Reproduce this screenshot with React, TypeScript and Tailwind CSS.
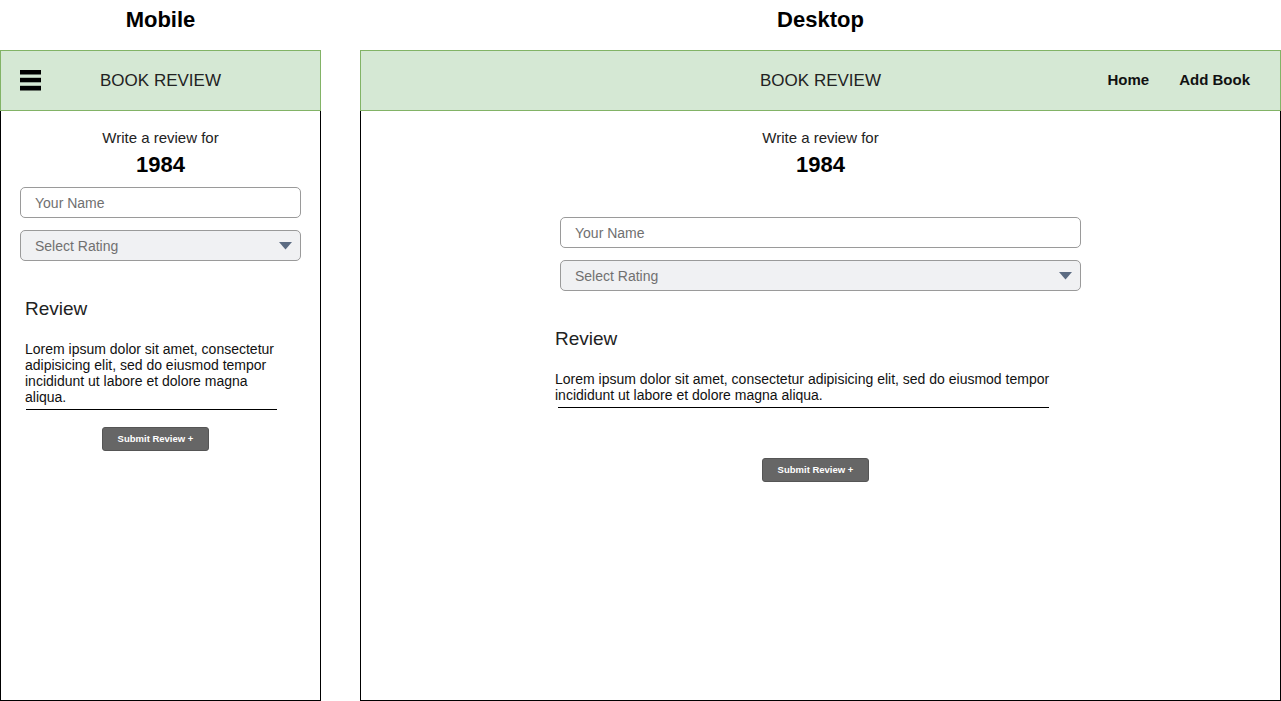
import React from "react";

const font = { fontFamily: '"Liberation Sans", Arial, sans-serif' };

function Hamburger() {
  return (
    <svg width="21" height="21" viewBox="0 0 21 21">
      <rect x="0" y="0" width="21" height="4.5" fill="#000" />
      <rect x="0" y="7.8" width="21" height="4.5" fill="#000" />
      <rect x="0" y="15.8" width="21" height="4.7" fill="#000" />
    </svg>
  );
}

function Caret() {
  return (
    <svg width="13" height="8" viewBox="0 0 13 8">
      <path d="M0 0 H13 L6.5 7.5 Z" fill="#5b6b82" />
    </svg>
  );
}

function NameInput() {
  return (
    <div className="h-[31px] w-full rounded-[5px] border border-[#9a9a9a] bg-white flex items-center pl-[14px] pt-px text-[14px] text-[#707070]">
      Your Name
    </div>
  );
}

function RatingSelect() {
  return (
    <div className="h-[31px] w-full rounded-[5px] border border-[#9a9a9a] bg-[#f0f1f3] flex items-center justify-between pl-[14px] pr-[8px] pt-px text-[14px] text-[#707070]">
      <span>Select Rating</span>
      <Caret />
    </div>
  );
}

function SubmitButton() {
  return (
    <div className="h-[24px] w-[107px] rounded-[3px] border border-[#555] bg-[#666666] flex items-center justify-center text-[9.5px] font-bold text-white">
      Submit Review +
    </div>
  );
}

export default function App() {
  return (
    <div className="w-[1281px] h-[701px] bg-white text-black overflow-hidden" style={font}>
      <div className="flex h-[50px] items-center">
        <div className="w-[321px] text-center text-[22px] font-bold leading-[26px] -mt-[10px]">Mobile</div>
        <div className="w-[39px]" />
        <div className="w-[921px] text-center text-[22px] font-bold leading-[26px] -mt-[10px]">Desktop</div>
      </div>
      <div className="flex gap-[39px] h-[651px]">
        {/* Mobile */}
        <div className="w-[321px] flex flex-col">
          <div className="h-[61px] bg-[#d5e8d4] border border-[#82b366] grid grid-cols-[1fr_auto_1fr] items-center">
            <div className="pl-[19px] flex items-center">
              <Hamburger />
            </div>
            <div className="text-[17px] text-[#222]">BOOK REVIEW</div>
            <div />
          </div>
          <div className="flex-1 border-x border-b border-black flex flex-col">
            <div className="mt-[18px] text-center text-[15px] leading-[17px] text-[#222]">Write a review for</div>
            <div className="mt-[6px] text-center text-[22px] font-bold leading-[26px]">1984</div>
            <div className="mt-[9px] ml-[19px] w-[281px] flex flex-col gap-[12px]">
              <NameInput />
              <RatingSelect />
            </div>
            <div className="mt-[37px] ml-[24px] text-[19px] leading-[22px] text-[#222]">Review</div>
            <div className="mt-[21px] ml-[24px] w-[256px] text-[14px] leading-[16px] text-[#111]">
              Lorem ipsum dolor sit amet, consectetur adipisicing elit, sed do eiusmod tempor incididunt ut labore et dolore magna aliqua.
            </div>
            <div className="mt-[4px] ml-[25px] w-[251px] h-px bg-black" />
            <div className="mt-[17px] ml-[101px]">
              <SubmitButton />
            </div>
          </div>
        </div>
        {/* Desktop */}
        <div className="w-[921px] flex flex-col">
          <div className="h-[61px] bg-[#d5e8d4] border border-[#82b366] grid grid-cols-[1fr_auto_1fr] items-center">
            <div />
            <div className="text-[17px] text-[#222]">BOOK REVIEW</div>
            <div className="flex justify-end gap-[30px] pr-[30px] text-[15px] font-bold text-[#111]">
              <span>Home</span>
              <span>Add Book</span>
            </div>
          </div>
          <div className="flex-1 border-x border-b border-black flex flex-col">
            <div className="mt-[18px] text-center text-[15px] leading-[17px] text-[#222]">Write a review for</div>
            <div className="mt-[6px] text-center text-[22px] font-bold leading-[26px]">1984</div>
            <div className="mt-[39px] mx-auto w-[521px] flex flex-col gap-[12px]">
              <NameInput />
              <RatingSelect />
            </div>
            <div className="mt-[37px] ml-[194px] text-[19px] leading-[22px] text-[#222]">Review</div>
            <div className="mt-[21px] ml-[194px] w-[500px] text-[14px] leading-[16px] text-[#111]">
              Lorem ipsum dolor sit amet, consectetur adipisicing elit, sed do eiusmod tempor incididunt ut labore et dolore magna aliqua.
            </div>
            <div className="mt-[4px] ml-[197px] w-[491px] h-px bg-black" />
            <div className="mt-[50px] ml-[401px]">
              <SubmitButton />
            </div>
          </div>
        </div>
      </div>
    </div>
  );
}
